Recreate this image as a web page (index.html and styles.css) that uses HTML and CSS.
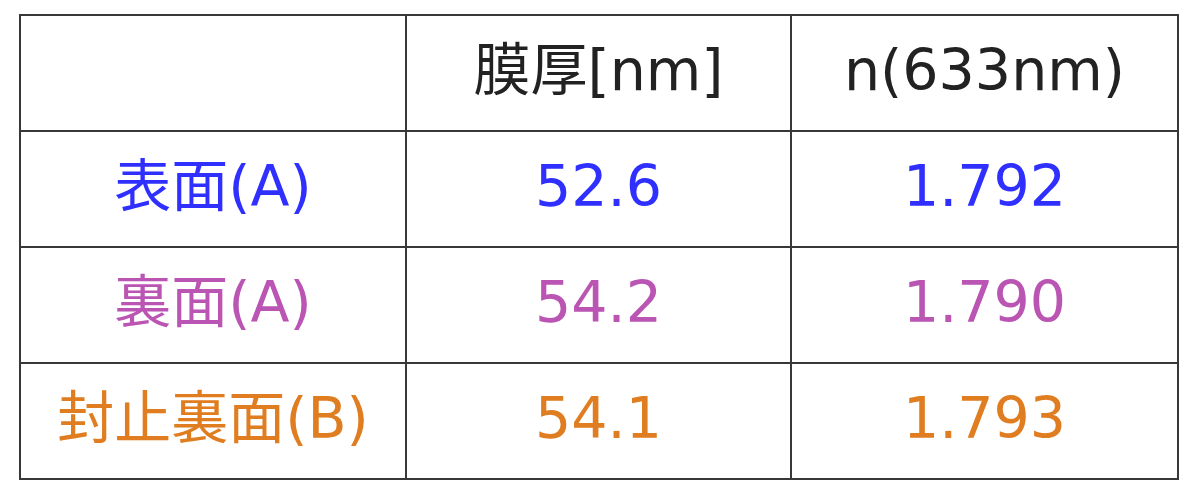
FILE: index.html
```html
<!DOCTYPE html>
<html lang="ja">
<head>
<meta charset="utf-8">
<link rel="stylesheet" href="styles.css">
</head>
<body>
<table class="data">
  <colgroup>
    <col class="c1"><col class="c2"><col class="c3">
  </colgroup>
  <tr class="head"><td></td><td>膜厚[nm]</td><td>n(633nm)</td></tr>
  <tr class="blue"><td>表面(A)</td><td>52.6</td><td>1.792</td></tr>
  <tr class="pink"><td>裏面(A)</td><td>54.2</td><td>1.790</td></tr>
  <tr class="orange"><td>封止裏面(B)</td><td>54.1</td><td>1.793</td></tr>
</table>
</body>
</html>
```
FILE: styles.css
```css
html, body {
  margin: 0;
  padding: 0;
  background: #ffffff;
}
body {
  padding: 14px 0 0 19px;
}
.data {
  border-collapse: collapse;
  font-family: "DejaVu Sans", "Noto Sans CJK JP", sans-serif;
  font-size: 57px;
  table-layout: fixed;
  width: 1160px;
}
.c1 { width: 386px; }
.c2 { width: 385px; }
.c3 { width: 387px; }
.data td {
  border: 2px solid #383838;
  height: 109px;
  padding: 0 0 5px 0;
  text-align: center;
  vertical-align: middle;
  line-height: 1;
}
.head td { color: #222222; }
.blue td { color: #2f2fff; }
.pink td { color: #bb55b3; }
.orange td { color: #e07d20; }
```
